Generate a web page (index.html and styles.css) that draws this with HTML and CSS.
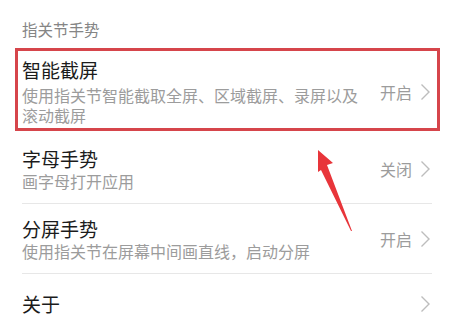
FILE: index.html
```html
<!DOCTYPE html>
<html lang="zh-CN">
<head>
  <meta charset="UTF-8" />
  <meta name="viewport" content="width=device-width, initial-scale=1.0"/>
  <title>指关节手势</title>
  <link rel="stylesheet" href="styles.css">
</head>
<body>
  <div class="settings">
    <div class="settings-header">指关节手势</div>
    <div class="settings-list">
      <div class="settings-row marked">
        <div class="row-text">
          <div class="row-title">智能截屏</div>
          <div class="row-desc">使用指关节智能截取全屏、区域截屏、录屏以及滚动截屏</div>
        </div>
        <span class="row-value">开启</span>
        <svg class="row-chevron" viewBox="0 0 12 18" width="12" height="18"><path d="M1.5 1.5 L9 9 L1.5 16.5" /></svg>
      </div>
      <div class="settings-row">
        <div class="row-text">
          <div class="row-title">字母手势</div>
          <div class="row-desc">画字母打开应用</div>
        </div>
        <span class="row-value">关闭</span>
        <svg class="row-chevron" viewBox="0 0 12 18" width="12" height="18"><path d="M1.5 1.5 L9 9 L1.5 16.5" /></svg>
      </div>
      <div class="settings-row">
        <div class="row-text">
          <div class="row-title">分屏手势</div>
          <div class="row-desc">使用指关节在屏幕中间画直线，启动分屏</div>
        </div>
        <span class="row-value">开启</span>
        <svg class="row-chevron" viewBox="0 0 12 18" width="12" height="18"><path d="M1.5 1.5 L9 9 L1.5 16.5" /></svg>
      </div>
      <div class="settings-row single">
        <div class="row-text">
          <div class="row-title">关于</div>
        </div>
        <svg class="row-chevron" viewBox="0 0 12 18" width="12" height="18"><path d="M1.5 1.5 L9 9 L1.5 16.5" /></svg>
      </div>
    </div>
    <!-- annotation arrow pointing at the marked row -->
    <svg class="pointer-arrow" viewBox="0 0 50 90" width="50" height="90">
      <polygon points="8,5 23,18 17,20 42,86 41,86 11,25 8,27" />
    </svg>
  </div>
</body>
</html>
```

FILE: styles.css
```css
:root {
  --text: #1b1b1b;
  --muted: #9c9c9c;
  --line: #e7e7e7;
  --mark: #d6454b;
  --arrow: #e8353a;
}
* { box-sizing: border-box; margin: 0; padding: 0; }
body {
  background: #fff;
  font-family: "Noto Sans CJK SC", "Noto Sans", sans-serif;
  color: var(--text);
  width: 450px;
  height: 318px;
  overflow: hidden;
}
.settings {
  position: relative;
  height: 318px;
}
.settings-header {
  padding: 20px 22px 0;
  font-size: 15.5px;
  line-height: 18px;
  color: #858585;
}
.settings-list {
  margin: 0 18px 0 22px;
}
.settings-row {
  display: flex;
  align-items: center;
  padding: 13px 0 12px;
  border-bottom: 1px solid var(--line);
}
.settings-row.marked {
  margin: 10px -8px 3px -7px;
  border: 3px solid var(--mark);
  padding: 7px 5px 3px 4px;
}
.settings-row.single {
  border-bottom: none;
  padding-top: 18px;
}
.row-text {
  flex: 1;
  margin-right: 12px;
}
.row-title {
  font-size: 19px;
  line-height: 24px;
}
.row-desc {
  margin-top: 3px;
  font-size: 16px;
  line-height: 20px;
  color: var(--muted);
}
.settings-row:not(.marked) .row-desc { margin-top: 0; }
.row-value {
  font-size: 16px;
  line-height: 20px;
  color: var(--muted);
  margin-right: 8px;
}
.row-chevron {
  flex: none;
}
.row-chevron path {
  fill: none;
  stroke: #bdbdbd;
  stroke-width: 1.4;
}
.pointer-arrow {
  position: absolute;
  left: 310px;
  top: 145px;
}
.pointer-arrow polygon {
  fill: var(--arrow);
}
```
